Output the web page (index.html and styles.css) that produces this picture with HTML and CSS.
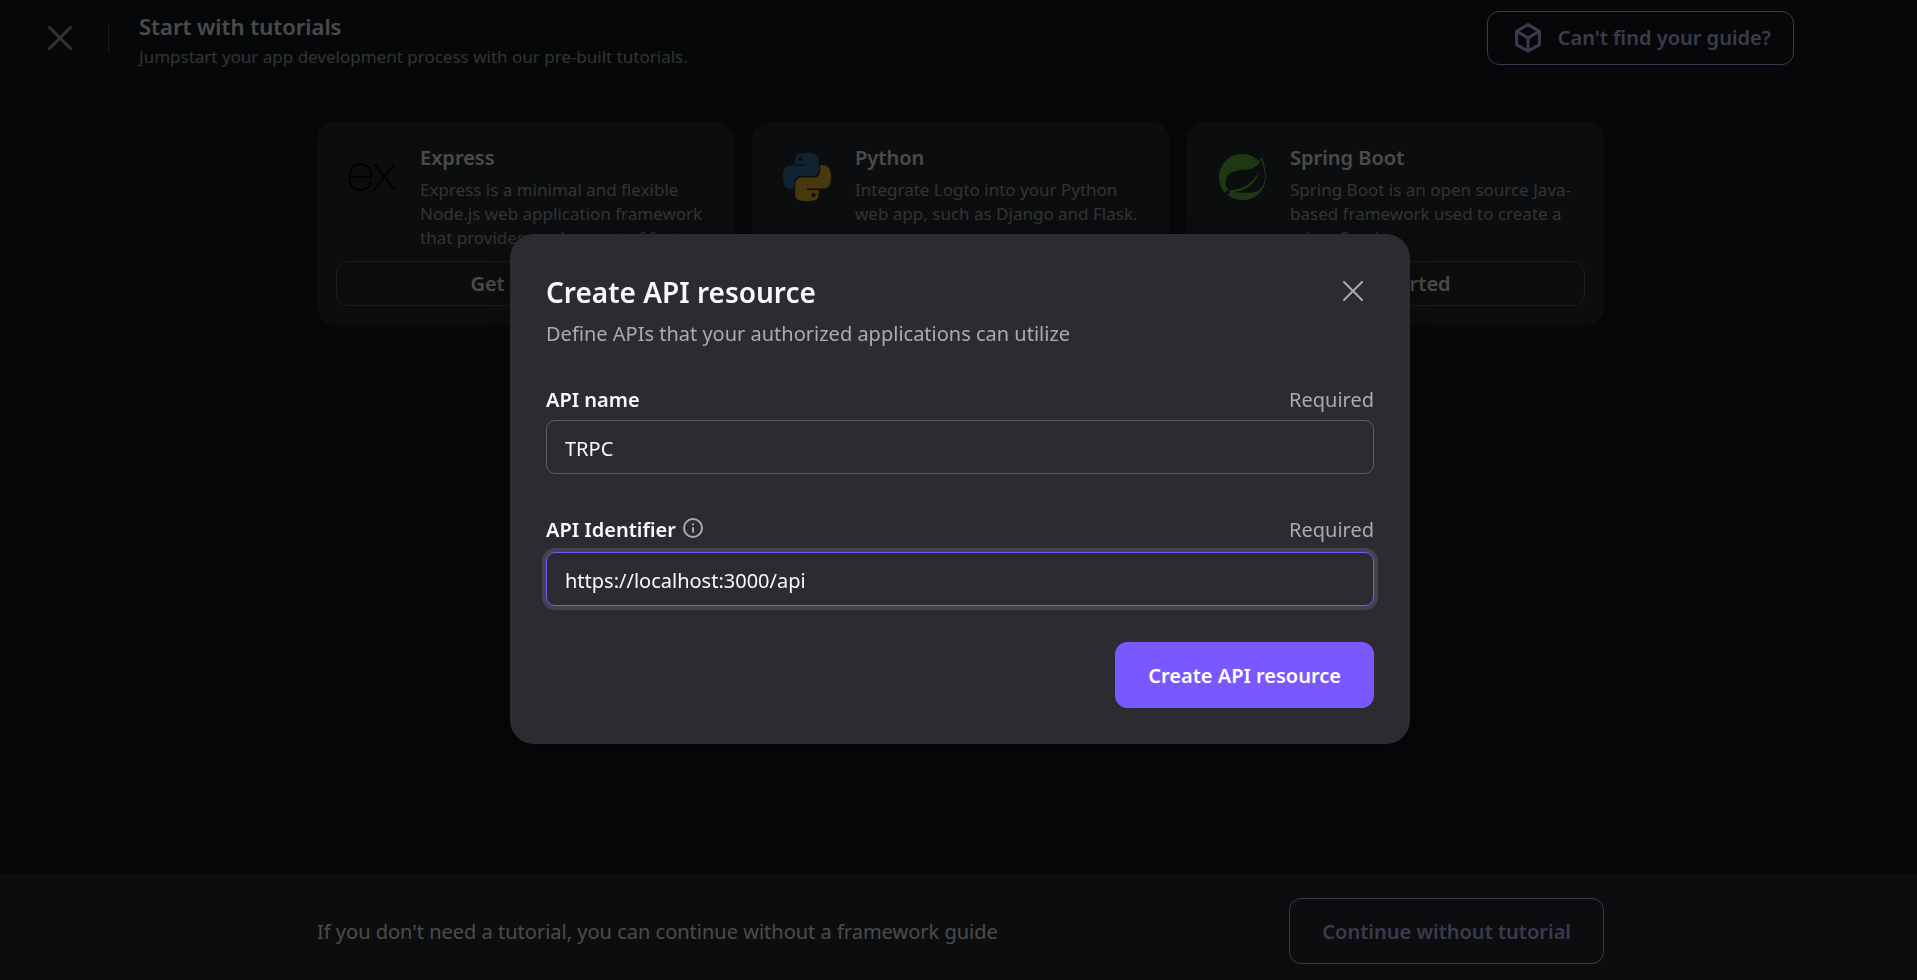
FILE: index.html
```html
<!DOCTYPE html>
<html lang="en">
<head>
<meta charset="utf-8">
<title>Create API resource</title>
<link rel="stylesheet" href="styles.css">
</head>
<body>
<div class="page">
  <header class="header">
    <button class="icon-button" type="button" aria-label="Close tutorials">
      <svg class="close-large" viewBox="0 0 24 24"><path d="M1.5 1.5 22.5 22.5M22.5 1.5 1.5 22.5"/></svg>
    </button>
    <span class="divider"></span>
    <div class="heading">
      <h1 class="heading-title">Start with tutorials</h1>
      <p class="heading-text">Jumpstart your app development process with our pre-built tutorials.</p>
    </div>
    <button class="button outlined guide-button" type="button">
      <svg class="cube" viewBox="0 0 36 36"><path d="M18 4.6 29.4 11.2V24.6L18 31.2 6.6 24.6V11.2ZM6.9 11.4 18 18 29.1 11.4M18 18V31"/></svg>
      Can't find your guide?
    </button>
  </header>

  <main class="cards">
    <article class="card">
      <div class="card-body">
        <svg class="logo" viewBox="0 0 48 48"><g fill="none" stroke="#000" stroke-width="1.9"><path d="M1.4 23.7H23.4C23.4 15.5 19 11 12.6 11C5.8 11 1.4 16.4 1.4 24C1.4 32 5.6 37 12.4 37C18 37 21.8 34 23 28.6"/><path d="M26.4 11 47.2 37.3M46.6 11 26 37.3"/></g></svg>
        <div class="card-copy">
          <h2 class="card-title">Express</h2>
          <p class="card-text">Express is a minimal and flexible<br>Node.js web application framework<br>that provides a robust set of feat…</p>
        </div>
      </div>
      <button class="button start-button" type="button">Get started</button>
    </article>
    <article class="card">
      <div class="card-body">
        <svg class="logo" viewBox="0 0 48 48">
          <path fill="#3776ab" fill-rule="evenodd" d="M23.8 0C16 0 12.3 1.6 12.3 6V11.2H24V12.6H7.2C2.4 12.6 0 17 0 24C0 31 2.4 36 7.2 36H10.8V30C10.8 25.6 14.2 23 18 23H29.4C33 23 35.8 20.2 35.8 17V6C35.8 1.6 31.4 0 23.8 0ZM17.4 3.9A2.2 2.2 0 1 1 17.4 8.3A2.2 2.2 0 1 1 17.4 3.9Z"/>
          <path fill="#f0bc30" fill-rule="evenodd" d="M24.2 48C32 48 35.7 46.4 35.7 42V37H24V35.4H40.8C45.6 35.4 48 31 48 24C48 17 45.6 12.2 40.8 12.2H37.2V18C37.2 22.4 33.8 24.6 30 24.6H18.6C15 24.6 12.2 27.8 12.2 31V42C12.2 46.4 16.6 48 24.2 48ZM30.6 44.3A2.2 2.2 0 1 1 30.6 39.9A2.2 2.2 0 1 1 30.6 44.3Z"/>
        </svg>
        <div class="card-copy">
          <h2 class="card-title">Python</h2>
          <p class="card-text">Integrate Logto into your Python<br>web app, such as Django and Flask.</p>
        </div>
      </div>
      <button class="button start-button" type="button">Get started</button>
    </article>
    <article class="card">
      <div class="card-body">
        <svg class="logo" viewBox="0 0 48 48">
          <path fill="#68bd45" fill-rule="evenodd" d="M43.6 3.4C45.8 9.4 48 17 48 24.2C47.6 37.8 37.4 47 24.6 47C17.8 47 12.2 44.6 8 40.6C3.8 36.6 1 30.8 1 24.4C1 11.6 11 1 24 1C30.6 1 36.8 3.6 41 8.2C42.2 6.8 43 5.2 43.6 3.4ZM43 6.8C40.4 12.8 35 16.4 28.6 16.6C17 17 8 19.8 7.4 28.2C7.2 32 8.4 35 10.6 37.4C21.4 37.2 33.4 33.2 41 18.6C38.4 29.6 29 38.4 14.6 39.4C27 39.2 36.2 41.6 42.6 35.4C49.4 28.6 47.2 17.6 43 6.8Z"/>
          <circle cx="9.6" cy="39.6" r="2.1" fill="#292d30"/>
        </svg>
        <div class="card-copy">
          <h2 class="card-title">Spring Boot</h2>
          <p class="card-text">Spring Boot is an open source Java-<br>based framework used to create a<br>micro Service.</p>
        </div>
      </div>
      <button class="button start-button" type="button">Get started</button>
    </article>
  </main>

  <footer class="footer">
    <div class="footer-inner">
      <p class="footer-text">If you don't need a tutorial, you can continue without a framework guide</p>
      <button class="button outlined large" type="button">Continue without tutorial</button>
    </div>
  </footer>
</div>

<div class="overlay">
  <form class="modal" role="dialog" aria-modal="true" aria-labelledby="modal-title">
    <div class="modal-header">
      <div>
        <h2 class="modal-title" id="modal-title">Create API resource</h2>
        <p class="modal-subtitle">Define APIs that your authorized applications can utilize</p>
      </div>
      <button class="icon-button modal-close" type="button" aria-label="Close dialog">
        <svg class="close-small" viewBox="0 0 20 20"><path d="M1 1 19 19M19 1 1 19"/></svg>
      </button>
    </div>
    <div class="field">
      <div class="field-head">
        <label class="label" for="api-name">API name</label>
        <span class="required">Required</span>
      </div>
      <input class="input" id="api-name" type="text" value="TRPC">
    </div>
    <div class="field">
      <div class="field-head with-info">
        <label class="label" for="api-identifier">API Identifier</label>
        <svg class="info" viewBox="0 0 20 20"><circle cx="10" cy="10" r="9"/><path d="M10 9.2V14.6M10 5.4V7.2"/></svg>
        <span class="required">Required</span>
      </div>
      <input class="input active" id="api-identifier" type="text" value="https://localhost:3000/api">
    </div>
    <div class="modal-footer">
      <button class="button primary large" type="submit">Create API resource</button>
    </div>
  </form>
</div>
</body>
</html>
```
FILE: styles.css
```css
* {
  box-sizing: border-box;
}

body {
  margin: 0;
  background: #171a1e;
  color: #f7f8f8;
  font-family: "Noto Sans", "Open Sans", sans-serif;
  font-size: 20px;
  line-height: 30px;
}

h1, h2, p {
  margin: 0;
}

button, input {
  font: inherit;
}

svg {
  display: block;
  flex: none;
}

.page {
  display: flex;
  flex-direction: column;
  min-height: 100vh;
}

.header {
  display: flex;
  align-items: center;
  height: 76px;
  padding: 0 123px 0 48px;
}

.icon-button {
  flex: none;
  padding: 0;
  border: 0;
  background: none;
  color: #a9acac;
}

.close-large, .close-small {
  fill: none;
  stroke: currentColor;
  stroke-width: 2;
  stroke-linecap: round;
}

.close-large {
  width: 24px;
  height: 24px;
  stroke-width: 3;
}

.close-small {
  width: 20px;
  height: 20px;
}

.divider {
  width: 1px;
  height: 30px;
  margin: 0 30px 0 36px;
  background: #5c5f60;
}

.heading {
  flex: 1;
  padding-top: 4px;
}

.heading-title {
  font-size: 22px;
  font-weight: 600;
  line-height: 30px;
}

.heading-text {
  margin-top: 4px;
  color: #a9acac;
  font-size: 17px;
  line-height: 24px;
}

.button {
  display: flex;
  align-items: center;
  justify-content: center;
  padding-top: 2px;
  border: 1px solid #5c5f60;
  border-radius: 12px;
  background: none;
  color: #f7f8f8;
  font-weight: 600;
  white-space: nowrap;
}

.outlined {
  border-color: #cabeff;
  color: #cabeff;
}

.large {
  height: 66px;
  padding: 2px 32px 0;
}

.guide-button {
  gap: 12px;
  height: 54px;
  padding: 0 22px;
}

.cube {
  width: 36px;
  height: 36px;
  fill: none;
  stroke: currentColor;
  stroke-width: 3;
  stroke-linejoin: round;
}

.cards, .footer-inner {
  width: 1291px;
  max-width: 100%;
  margin: 0 auto;
  padding-left: 4px;
}

.cards {
  display: grid;
  grid-template-columns: repeat(3, 1fr);
  align-items: start;
  flex: 1;
  gap: 18px;
  padding-top: 46px;
}

.card {
  padding: 19px;
  border-radius: 18px;
  background: #292d30;
}

.card-body {
  display: flex;
  gap: 24px;
  height: 120px;
  padding-left: 12px;
}

.logo {
  width: 48px;
  height: 48px;
  margin-top: 12px;
}

.card-title {
  margin: 2px 0 5px;
  font-size: 20px;
  font-weight: 600;
}

.card-text {
  color: #a9acac;
  font-size: 17px;
  line-height: 24px;
  white-space: nowrap;
}

.start-button {
  width: 100%;
  height: 45px;
}

.footer {
  padding: 24px 0 16px;
  background: #292d30;
}

.footer-inner {
  display: flex;
  align-items: center;
  justify-content: space-between;
}

.footer-text {
  padding-top: 2px;
}

.overlay {
  position: fixed;
  inset: 0;
  display: flex;
  align-items: center;
  justify-content: center;
  padding: 0 0 2px 3px;
  background: rgba(0, 0, 0, 0.7);
}

.modal {
  width: 900px;
  padding: 36px;
  border-radius: 24px;
  background: #2b2c31;
  box-shadow: 0 6px 30px rgba(0, 0, 0, 0.4);
}

.modal-header {
  display: flex;
  align-items: flex-start;
  justify-content: space-between;
}

.modal-close {
  margin: 11px 11px 0 0;
}

.modal-title {
  font-size: 28px;
  font-weight: 600;
  line-height: 45px;
}

.modal-subtitle {
  margin-top: 4px;
  color: #a9acac;
}

.field {
  margin-top: 36px;
}

.field + .field {
  margin-top: 41px;
}

.field-head {
  display: flex;
  align-items: center;
  margin-bottom: 5px;
}

.with-info {
  margin-bottom: 7px;
}

.label {
  font-weight: 600;
}

.required {
  margin-left: auto;
  color: #a9acac;
}

.info {
  width: 20px;
  height: 20px;
  margin: 0 0 4px 7px;
  fill: none;
  stroke: #a9acac;
  stroke-width: 2;
}

.input {
  display: block;
  width: 100%;
  height: 54px;
  padding: 2px 18px 0;
  border: 1px solid #5c5f60;
  border-radius: 9px;
  outline: none;
  background: none;
  color: #f7f8f8;
}

.input.active {
  border-color: #7958ff;
  box-shadow: 0 0 0 4px #454350;
}

.modal-footer {
  display: flex;
  justify-content: flex-end;
  margin-top: 36px;
}

.primary {
  border-color: #7958ff;
  background: #7958ff;
  color: #fff;
}
```
